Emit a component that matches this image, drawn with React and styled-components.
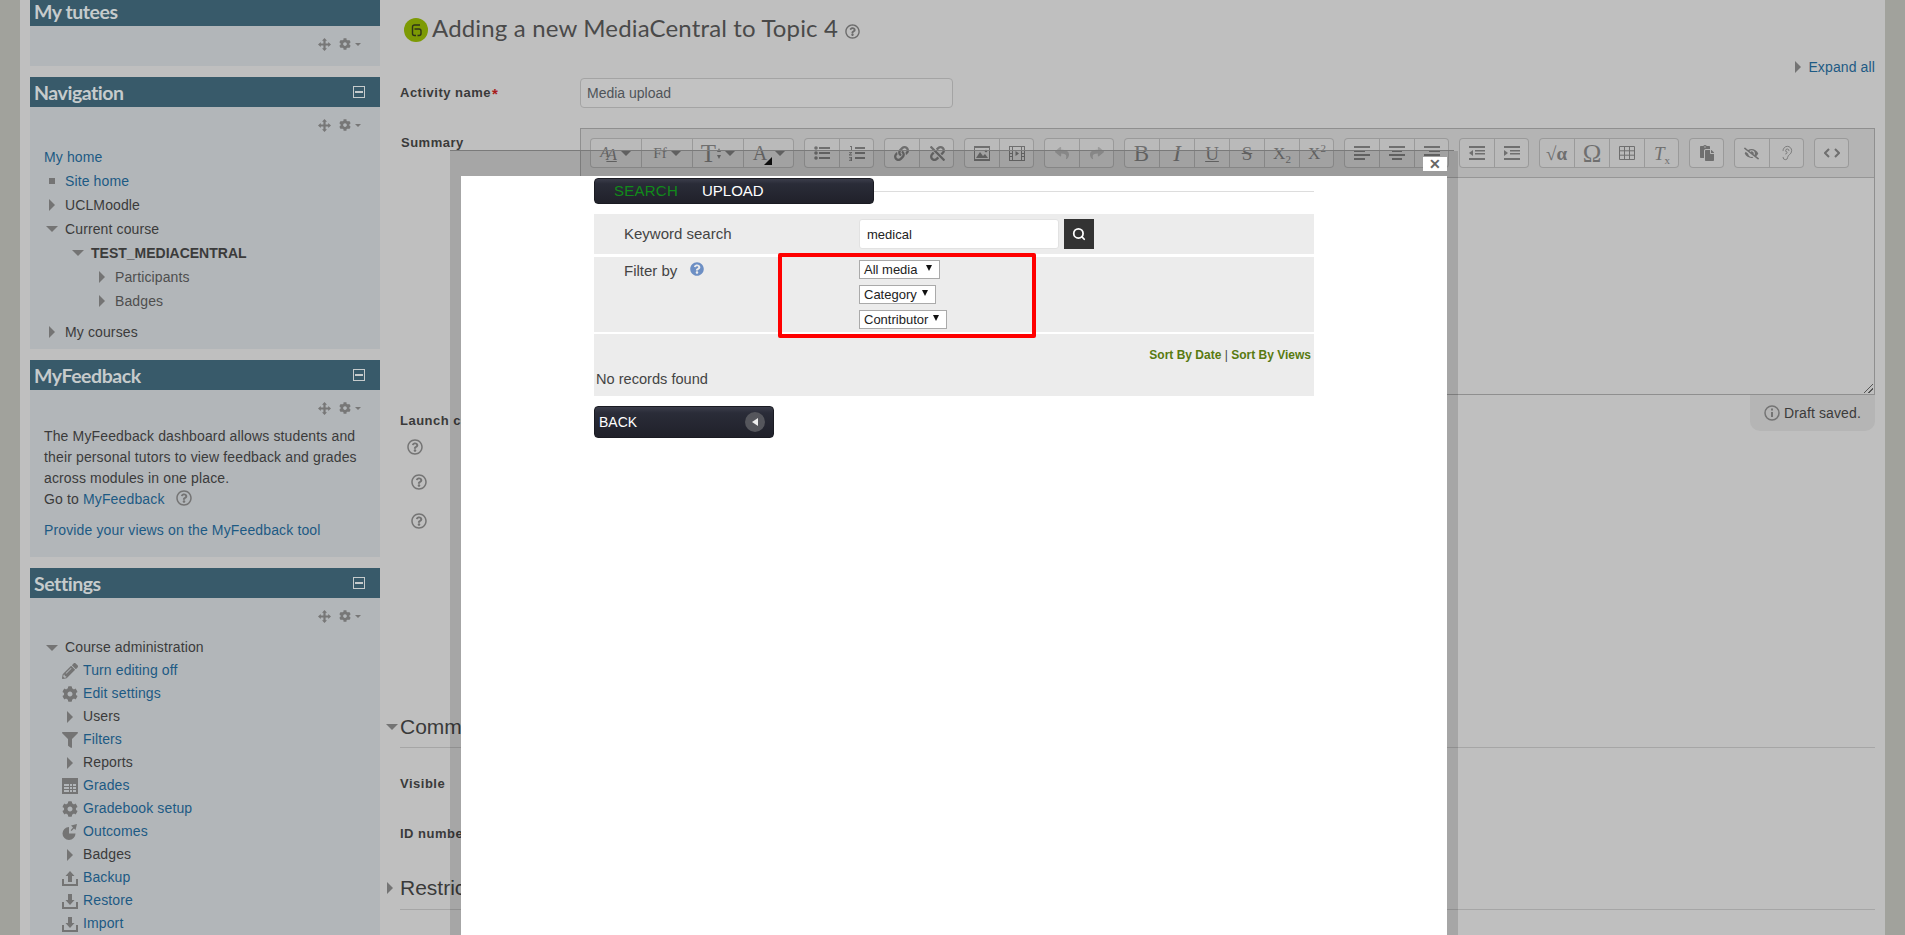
import React from "react";
import styled, { createGlobalStyle } from "styled-components";
import { FaCog, FaFilter, FaPencilAlt, FaLink, FaUnlink, FaReply, FaShare, FaPaste, FaEyeSlash, FaRegQuestionCircle, FaQuestionCircle } from "react-icons/fa";
import { Ear, Search } from "lucide-react";

const Global = createGlobalStyle`
  html, body { margin: 0; padding: 0; background: #a1a29c; }
  body { font-family: "Liberation Sans", Arial, sans-serif; font-size: 14px; color: #3b3b3b; }
  * { box-sizing: border-box; }
`;

const Viewport = styled.div`
  position: relative; width: 1905px; height: 935px; overflow: hidden;
  background: #a1a29c; padding: 0 20px;
`;
const Page = styled.div`
  display: flex; height: 935px; background: #bfbfbf; overflow: hidden;
`;
const Sidebar = styled.aside`
  flex: 0 0 360px; padding-left: 10px; margin-top: -4px; letter-spacing: 0.12px;
  display: flex; flex-direction: column; gap: 11px;
`;
const Block = styled.section`
  background: #b2b6b9; width: 350px; flex: none;
`;
const BlockHead = styled.header`
  height: 30px; background: #385a6a; display: flex; align-items: center; justify-content: space-between;
  padding: 0 15px 0 4px;
`;
const BlockTitle = styled.h2`
  margin: 1px 0 0; font: 700 19.5px/30px Lato, sans-serif; color: #c6cbcc; letter-spacing: -0.45px;
`;
const Minimise = styled.span`
  width: 12px; height: 12px; border: 1px solid #c6cbcc; display: flex; align-items: center; justify-content: center;
  &::after { content: ""; width: 8px; height: 2px; background: #c6cbcc; }
`;
const Controls = styled.div`
  height: ${p => p.$h || 38}px; display: flex; align-items: flex-start; justify-content: flex-end; gap: 8px;
  padding: 12px 19px 0 0; color: #777;
`;
const Caret = styled.span`
  width: 0; height: 0; border: 3.5px solid transparent; border-top: 3.5px solid #777; border-bottom: 0; margin: 5px 0 0 -4px;
`;
const Tree = styled.div`
  padding: 0 0 ${p => p.$pb || 0}px 14px;
`;
const Row = styled.div`
  height: ${p => p.$h}px; line-height: ${p => p.$h}px; display: flex; align-items: center;
  margin-left: ${p => p.$indent || 0}px; margin-top: ${p => p.$mt || 0}px; white-space: nowrap;
  font-weight: ${p => (p.$bold ? 700 : 400)}; letter-spacing: ${p => (p.$bold ? "0" : "inherit")};
  color: ${p => (p.$muted ? "#4e4e4e" : "#3b3b3b")};
`;
const Slot = styled.span`
  flex: 0 0 21px; display: flex; align-items: center; color: #747474;
`;
const TriRight = styled.span`
  width: 0; height: 0; margin-left: 5px; border-left: 6px solid #747474; border-top: 6px solid transparent; border-bottom: 6px solid transparent;
`;
const TriDown = styled.span`
  width: 0; height: 0; margin-left: 2px; border-top: 6px solid #747474; border-left: 6px solid transparent; border-right: 6px solid transparent;
`;
const Dot = styled.span`
  width: 6px; height: 6px; margin-left: 5px; background: #747474;
`;
const A = styled.span`
  color: #1d5a84;
`;
const Feedback = styled.div`
  padding: 0 14px; font-size: 14px; line-height: 21px; color: #3b3b3b; height: 131px; letter-spacing: 0.14px;
`;
const Provide = styled.div`
  margin-top: 10px;
`;
const HelpInline = styled.span`
  display: inline-flex; vertical-align: -2px; margin-left: 11px; color: #747474;
`;

const Main = styled.main`
  flex: 1; padding: 0 10px 0 20px; min-width: 0;
`;
const TitleRow = styled.div`
  height: 55px; padding: 15px 0 0 4px; display: flex; align-items: flex-start; gap: 4px;
`;
const TitleIcon = styled.span`
  width: 24px; height: 24px; margin-top: 3px; border-radius: 50%; background: #7d9a04; display: flex; align-items: center; justify-content: center;
`;
const Title = styled.h1`
  margin: 0; font: 400 24px/26px Lato, sans-serif; color: #4a4a4a; letter-spacing: 0.16px; white-space: nowrap;
`;
const TitleHelp = styled.span`
  margin: 9px 0 0 3px; display: flex; color: #6c6c6c;
`;
const ExpandRow = styled.div`
  height: 23px; display: flex; justify-content: flex-end; align-items: center; gap: 7px; letter-spacing: 0.12px;
`;
const FormRow = styled.div`
  display: flex; margin-top: ${p => p.$mt || 0}px;
`;
const Label = styled.label`
  flex: 0 0 180px; font-size: 13px; font-weight: 700; letter-spacing: 0.5px; color: #3a3a3a;
  line-height: 16px; padding-top: ${p => p.$pt || 0}px; padding-left: ${p => p.$pl || 0}px; white-space: nowrap;
`;
const Req = styled.span`
  color: #a81c1c; font-size: 15px; line-height: 12px; vertical-align: -2px; margin-left: 1px;
`;
const NameInput = styled.div`
  width: 373px; height: 30px; border: 1px solid #a4a4a4; border-radius: 4px; background: #c2c2c2;
  padding-left: 6px; line-height: 28px; font-size: 14px; color: #4f5459;
`;
const EditorCol = styled.div`
  flex: 1; display: flex; flex-direction: column; align-items: flex-end;
`;
const Editor = styled.div`
  align-self: stretch; height: 267px; border: 1px solid #8f8f8f; position: relative;
`;
const Toolbar = styled.div`
  height: 49px; background: #b4b4b4; border-bottom: 1px solid #969696; display: flex; gap: 10px; padding: 9px 0 0 9px;
`;
const Group = styled.div`
  display: flex; height: 30px; border-radius: 4px; background: #bababa; box-shadow: inset 0 0 0 1px #9a9a9a;
`;
const Btn = styled.span`
  width: ${p => p.$w || 35}px; flex: none; display: flex; align-items: center; justify-content: center; gap: 2px; color: ${p => (p.$faint ? "#9b9b9b" : "#6f6f6f")};
  font-family: "Liberation Serif", serif; font-size: ${p => p.$fs || 20}px; line-height: 1;
  & + & { border-left: 1px solid #9a9a9a; }
`;
const BtnCaret = styled.span`
  width: 0; height: 0; border-top: 5px solid #6f6f6f; border-left: 5.5px solid transparent; border-right: 5.5px solid transparent; margin-left: 2px;
`;
const DoubleA = styled.span`
  display: flex; align-items: flex-start; font-style: italic; font-size: 15px; line-height: 16px;
`;
const LowerA = styled.span`
  margin: 3px 0 0 -3px; text-decoration: underline; font-size: 17px;
`;
const Arrows = styled.span`
  display: flex; flex-direction: column; gap: 3px; margin-left: -1px;
  &::before { content: ""; border-bottom: 4px solid #6f6f6f; border-left: 2.5px solid transparent; border-right: 2.5px solid transparent; }
  &::after { content: ""; border-top: 4px solid #6f6f6f; border-left: 2.5px solid transparent; border-right: 2.5px solid transparent; }
`;
const ColorA = styled.span`
  position: relative; padding-right: 4px;
  &::after { content: ""; position: absolute; right: -1px; bottom: -2px; border-bottom: 8px solid #111; border-left: 8px solid transparent; }
`;
const Sub = styled.sub`
  font-size: 11px; line-height: 0; vertical-align: -4px;
`;
const Sup = styled.sup`
  font-size: 11px; line-height: 0; vertical-align: 7px;
`;
const Grip = styled.span`
  position: absolute; right: 1px; bottom: 1px; width: 9px; height: 9px;
  background: linear-gradient(135deg, transparent 45%, #555 45%, #555 55%, transparent 55%, transparent 72%, #555 72%, #555 82%, transparent 82%);
`;
const Draft = styled.div`
  width: 125px; height: 36px; background: #b5b5b5; border-radius: 0 0 10px 10px; display: flex; align-items: center; gap: 4px;
  padding-left: 14px; font-size: 14px; color: #3b3b3b; white-space: nowrap; letter-spacing: 0.12px;
`;
const HelpStack = styled.div`
  display: flex; flex-direction: column; color: #747474;
`;
const HelpItem = styled.span`
  display: flex; margin: ${p => p.$mt}px 0 0 ${p => p.$ml}px;
`;
const SectionHead = styled.div`
  position: relative; height: ${p => p.$h}px; font-size: 21px; line-height: 26px; color: #3a3a3a; border-bottom: 1px solid #a6a6a6;
  margin-top: ${p => p.$mt}px;
`;
const SectionTri = styled.span`
  position: absolute; left: ${p => p.$left}px; top: ${p => p.$top}px; display: flex;
`;

const Overlay = styled.div`
  position: absolute; left: 450px; top: 151px; width: 1008px; bottom: 0; background: rgba(0,0,0,.13); padding: 25px 11px 0;
  &::before { content: ""; position: absolute; left: 0; top: -1px; width: 1004px; height: 1px; background: #7a7a7a; }
`;
const Sheet = styled.div`
  height: 100%; background: #fff; padding: 2px 0 0 133px; position: relative;
  font-family: "Liberation Sans", Arial, sans-serif;
`;
const Close = styled.span`
  position: absolute; right: 0; top: -19px; width: 24px; height: 14px; background: #fff; display: flex; align-items: center; justify-content: center;
  font: 700 14px/14px "Liberation Sans", sans-serif; color: #666;
`;
const TabLine = styled.div`
  width: 720px; display: flex; align-items: center;
  &::after { content: ""; flex: 1; height: 1px; background: #ddd; }
`;
const darkBar = `
  background: linear-gradient(#3b3d4a 0, #2a2c38 20%, #20212a 100%); border-radius: 4px; border: 1px solid #1a1b22;
`;
const Tabs = styled.div`
  ${darkBar}
  width: 280px; height: 26px; display: flex; align-items: center; gap: 24px; padding: 0 0 2px 19px; font-size: 15px;
`;
const Tab = styled.span`
  color: ${p => (p.$active ? "#118a1a" : "#fff")}; letter-spacing: ${p => (p.$active ? "0.25px" : "0")};
`;
const Panel = styled.div`
  width: 720px; background: #ececec; margin-top: ${p => p.$mt}px; height: ${p => p.$h}px; position: relative; color: #444;
`;
const SearchLine = styled.div`
  display: flex; padding: 5px 0 0 30px; height: 100%;
`;
const PanelLabel = styled.div`
  flex: 0 0 235px; font-size: 15px; line-height: 18px; padding-top: ${p => p.$pt}px; display: flex; gap: 13px; align-items: flex-start;
`;
const SearchInput = styled.div`
  width: 200px; height: 30px; background: #fff; border: 1px solid #e2e2e2; border-radius: 3px; font-size: 13px; line-height: 30px; padding-left: 7px; color: #222;
`;
const SearchBtn = styled.span`
  width: 30px; height: 30px; margin-left: 5px; background: #333; color: #fff; display: flex; align-items: center; justify-content: center;
`;
const FilterLine = styled.div`
  display: flex; padding: 3px 0 0 30px;
`;
const FilterCol = styled.div`
  display: flex; flex-direction: column; gap: 6px; align-items: flex-start;
`;
const FakeSelect = styled.div`
  width: ${p => p.$w}px; height: 19px; background: #fff; border: 1px solid #aaa; display: flex; align-items: center; justify-content: space-between;
  padding: 0 7px 0 4px; font-size: 13px; color: #222; white-space: nowrap;
`;
const SelectArrow = styled.span`
  width: 0; height: 0; margin-top: -3px; border-top: 6px solid #111; border-left: 3px solid transparent; border-right: 3px solid transparent;
`;
const RedBox = styled.div`
  position: absolute; z-index: 1; left: 184px; top: -4px; width: 258px; height: 85px; border: 4px solid #f00; border-radius: 2px; pointer-events: none;
`;
const Sort = styled.div`
  text-align: right; padding: 14px 3px 0 0; font-size: 12px; line-height: 14px; font-weight: 700; color: #587a10;
`;
const SortSep = styled.span`
  color: #444; font-weight: 400;
`;
const NoRecords = styled.div`
  margin-top: 8px; padding-left: 2px; font-size: 14.6px; line-height: 18px;
`;
const Back = styled.div`
  ${darkBar}
  width: 180px; height: 32px; margin-top: 10px; display: flex; align-items: center; justify-content: space-between; padding: 0 8px 0 4px;
  color: #fff; font-size: 14px;
`;
const BackDot = styled.span`
  width: 20px; height: 20px; border-radius: 50%; background: #55565c; display: flex; align-items: center; justify-content: center;
  &::after { content: ""; width: 0; height: 0; border-right: 6px solid #eee; border-top: 4px solid transparent; border-bottom: 4px solid transparent; }
`;

const Move = () => (
  <svg width="13" height="13" viewBox="0 0 13 13" fill="#777"><path d="M6.5 0 9 2.8H7.6V5.4H10.2V4L13 6.5 10.2 9V7.6H7.6V10.2H9L6.5 13 4 10.2H5.4V7.6H2.8V9L0 6.5 2.8 4V5.4H5.4V2.8H4Z" /></svg>
);
const BlockControls = ({ h }) => (
  <Controls $h={h}><Move /><FaCog size={12} /><Caret /></Controls>
);
const Help = ({ size = 16 }) => <FaRegQuestionCircle size={size} />;
const GradesIcon = () => (
  <svg width="16" height="16" viewBox="0 0 16 16"><path fill="#747474" d="M0 0h16v16H0z" /><path fill="#b2b6b9" d="M2 6h5v2H2zm0 3h5v2H2zm0 3h5v2H2zm6-6h2v2H8zm3 0h3v2h-3zM8 9h2v2H8zm3 0h3v2h-3zm-3 3h2v2H8zm3 0h3v2h-3z" /></svg>
);
const OutcomesIcon = () => (
  <svg width="16" height="16" viewBox="0 0 16 16" fill="#747474"><path d="M7 3a6.5 6.5 0 1 0 6.5 6.5H7z" /><path d="M9 1.5 15 0l-1.5 6L12 4.5 9.5 7 8.7 6.2 11 3.5z" /></svg>
);
const Tray = ({ up }) => (
  <svg width="16" height="16" viewBox="0 0 16 16" fill="#747474">
    <path d="M0 9h2v5h12V9h2v7H0z" />
    {up ? <path d="M8 1l4.5 5H10v6H6V6H3.5z" /> : <path d="M6 1h4v6h2.5L8 12 3.5 7H6z" />}
  </svg>
);
const Lines = ({ rows }) => (
  <svg width="16" height="14" viewBox="0 0 16 14" fill="#6f6f6f">
    {rows.map((r, i) => <rect key={i} x={r[0]} y={i * 4} width={r[1]} height="2" />)}
  </svg>
);
const BulletList = () => (
  <svg width="16" height="14" viewBox="0 0 16 14" fill="#6f6f6f"><circle cx="2" cy="2" r="1.8" /><circle cx="2" cy="7" r="1.8" /><circle cx="2" cy="12" r="1.8" /><path d="M5 1h11v2H5zm0 5h11v2H5zm0 5h11v2H5z" /></svg>
);
const NumList = () => (
  <svg width="16" height="15" viewBox="0 0 16 15" fill="#6f6f6f"><path d="M1 0h2v4H2V1H1zM0 6h3v.8L1 8.6h2v.8H0v-.8l2-1.8H0zm0 5h3v4H0v-.8h2v-.8H.6v-.8H2v-.8H0zM6 1h10v2H6zm0 5h10v2H6zm0 5h10v2H6z" /></svg>
);
const ImageIcon = () => (
  <svg width="16" height="15" viewBox="0 0 16 15"><path fill="#6f6f6f" fillRule="evenodd" d="M0 0h16v15H0zm1 2v11h14V2z" /><path fill="#6f6f6f" d="M2 12l4-6 3 4 2-2 3 4z" /><circle cx="12" cy="5" r="1.3" fill="#6f6f6f" /></svg>
);
const FilmIcon = () => (
  <svg width="16" height="15" viewBox="0 0 16 15"><path fill="#6f6f6f" fillRule="evenodd" d="M0 0h16v15H0zm1 1v3h2V1zm0 4v2h2V5zm0 3v2h2V8zm0 3v3h2v-3zM13 1v3h2V1zm0 4v2h2V5zm0 3v2h2V8zm0 3v3h2v-3zM4 1v13h8V1z" /><path fill="#6f6f6f" d="M6.5 5l3.5 2.5L6.5 10z" /></svg>
);
const IndentIcon = ({ out }) => (
  <svg width="16" height="14" viewBox="0 0 16 14" fill="#6f6f6f"><path d="M0 0h16v2H0zM6 4h10v1.5H6zm0 3h10v1.5H6zM0 12h16v2H0z" /><path d={out ? "M4 4v6L0 7z" : "M0 4v6l4-3z"} /></svg>
);
const TableIcon = () => (
  <svg width="16" height="14" viewBox="0 0 16 14" fill="none" stroke="#6f6f6f"><path d="M.5.5h15v13H.5zM.5 4.8h15M.5 9.2h15M5.5.5v13M10.5.5v13" /></svg>
);
const CodeIcon = () => (
  <svg width="16" height="10" viewBox="0 0 16 10" fill="none" stroke="#6f6f6f" strokeWidth="2"><path d="M5 1 1 5l4 4M11 1l4 4-4 4" /></svg>
);
const Info = () => (
  <svg width="16" height="16" viewBox="0 0 16 16" fill="none" stroke="#747474" strokeWidth="1.5"><circle cx="8" cy="8" r="7" /><path d="M8 7v5" strokeWidth="2" /><path d="M8 3.5v2" strokeWidth="2" /></svg>
);
const MediaGlyph = () => (
  <svg width="15" height="15" viewBox="0 0 15 15" fill="none" stroke="#2e3418" strokeWidth="1.4"><path d="M11 2H5.5a2 2 0 0 0-2 2v6.5a2 2 0 0 0 2 2H7" /><path d="M5.5 6H10a2 2 0 0 1 2 2v2.5a2 2 0 0 1-2 2H8.5" /></svg>
);

const navRows = [
  { text: "Site home", link: 1, icon: <Dot /> },
  { text: "UCLMoodle", icon: <TriRight /> },
  { text: "Current course", icon: <TriDown /> },
  { text: "TEST_MEDIACENTRAL", icon: <TriDown />, indent: 26, bold: 1 },
  { text: "Participants", icon: <TriRight />, indent: 50, muted: 1 },
  { text: "Badges", icon: <TriRight />, indent: 50, muted: 1 },
];
const settingsRows = [
  { text: "Turn editing off", link: 1, icon: <FaPencilAlt size={16} /> },
  { text: "Edit settings", link: 1, icon: <FaCog size={16} /> },
  { text: "Users", icon: <TriRight /> },
  { text: "Filters", link: 1, icon: <FaFilter size={16} /> },
  { text: "Reports", icon: <TriRight /> },
  { text: "Grades", link: 1, icon: <GradesIcon /> },
  { text: "Gradebook setup", link: 1, icon: <FaCog size={16} /> },
  { text: "Outcomes", link: 1, icon: <OutcomesIcon /> },
  { text: "Badges", icon: <TriRight /> },
  { text: "Backup", link: 1, icon: <Tray up /> },
  { text: "Restore", link: 1, icon: <Tray /> },
  { text: "Import", link: 1, icon: <Tray /> },
];

const TreeRow = ({ r, h }) => (
  <Row $h={h} $indent={r.indent} $bold={r.bold} $muted={r.muted}>
    <Slot>{r.icon}</Slot>
    {r.link ? <A>{r.text}</A> : r.text}
  </Row>
);

const toolGroups = [
  [
    { w: 51, c: <><DoubleA>A<LowerA>A</LowerA></DoubleA><BtnCaret /></> },
    { w: 51, fs: 15, c: <><span>Ff</span><BtnCaret /></> },
    { w: 51, fs: 25, c: <><span>T</span><Arrows /><BtnCaret /></> },
    { w: 51, fs: 20, c: <><ColorA>A</ColorA><BtnCaret /></> },
  ],
  [{ c: <BulletList /> }, { c: <NumList /> }],
  [{ c: <FaLink size={15} /> }, { c: <FaUnlink size={15} /> }],
  [{ c: <ImageIcon /> }, { c: <FilmIcon /> }],
  [{ faint: 1, c: <FaReply size={14} /> }, { faint: 1, c: <FaShare size={14} /> }],
  [
    { fs: 23, c: "B" },
    { fs: 23, c: <i>I</i> },
    { fs: 19, c: <u>U</u> },
    { fs: 19, c: <s>S</s> },
    { fs: 17, c: <span>X<Sub>2</Sub></span> },
    { fs: 17, c: <span>X<Sup>2</Sup></span> },
  ],
  [
    { c: <Lines rows={[[0, 16], [0, 11], [0, 16], [0, 11]]} /> },
    { c: <Lines rows={[[0, 16], [3, 10], [0, 16], [3, 10]]} /> },
    { c: <Lines rows={[[0, 16], [5, 11], [0, 16], [5, 11]]} /> },
  ],
  [{ c: <IndentIcon out /> }, { c: <IndentIcon /> }],
  [
    { fs: 19, c: <b>√α</b> },
    { fs: 25, c: "Ω" },
    { c: <TableIcon /> },
    { fs: 19, c: <span><i>T</i><Sub>x</Sub></span> },
  ],
  [{ c: <FaPaste size={16} /> }],
  [{ c: <FaEyeSlash size={15} /> }, { c: <Ear size={16} strokeWidth={1.2} /> }],
  [{ c: <CodeIcon /> }],
];

export default function App() {
  return (
    <>
      <Global />
      <Viewport>
        <Page>
          <Sidebar>
            <Block>
              <BlockHead><BlockTitle>My tutees</BlockTitle></BlockHead>
              <BlockControls h={40} />
            </Block>
            <Block>
              <BlockHead><BlockTitle>Navigation</BlockTitle><Minimise /></BlockHead>
              <BlockControls />
              <Tree $pb={5}>
                <Row $h={24}><A>My home</A></Row>
                {navRows.map(r => <TreeRow key={r.text} r={r} h={24} />)}
                <Row $h={24} $mt={7}><Slot><TriRight /></Slot>My courses</Row>
              </Tree>
            </Block>
            <Block>
              <BlockHead><BlockTitle>MyFeedback</BlockTitle><Minimise /></BlockHead>
              <BlockControls h={36} />
              <Feedback>
                The MyFeedback dashboard allows students and<br />
                their personal tutors to view feedback and grades<br />
                across modules in one place.<br />
                Go to <A>MyFeedback</A><HelpInline><Help /></HelpInline>
                <Provide><A>Provide your views on the MyFeedback tool</A></Provide>
              </Feedback>
            </Block>
            <Block>
              <BlockHead><BlockTitle>Settings</BlockTitle><Minimise /></BlockHead>
              <BlockControls />
              <Tree>
                <Row $h={23}><Slot><TriDown /></Slot>Course administration</Row>
                {settingsRows.map(r => <TreeRow key={r.text} r={{ ...r, indent: 18 }} h={23} />)}
              </Tree>
            </Block>
          </Sidebar>
          <Main>
            <TitleRow>
              <TitleIcon><MediaGlyph /></TitleIcon>
              <Title>Adding a new MediaCentral to Topic 4</Title>
              <TitleHelp><Help size={15} /></TitleHelp>
            </TitleRow>
            <ExpandRow><TriRight /><A>Expand all</A></ExpandRow>
            <FormRow>
              <Label $pt={7}>Activity name<Req>*</Req></Label>
              <NameInput>Media upload</NameInput>
            </FormRow>
            <FormRow $mt={20}>
              <Label $pt={7} $pl={1}>Summary</Label>
              <EditorCol>
                <Editor>
                  <Toolbar>
                    {toolGroups.map((g, i) => (
                      <Group key={i}>
                        {g.map((b, j) => <Btn key={j} $w={b.w} $fs={b.fs} $faint={b.faint}>{b.c}</Btn>)}
                      </Group>
                    ))}
                  </Toolbar>
                  <Grip />
                </Editor>
                <Draft><Info />Draft saved.</Draft>
              </EditorCol>
            </FormRow>
            <FormRow $mt={-18}>
              <Label>Launch container</Label>
            </FormRow>
            <HelpStack>
              <HelpItem $mt={10} $ml={7}><Help /></HelpItem>
              <HelpItem $mt={19} $ml={11}><Help /></HelpItem>
              <HelpItem $mt={23} $ml={11}><Help /></HelpItem>
            </HelpStack>
            <SectionHead $mt={185} $h={34}>
              <SectionTri $left={-16} $top={10}><TriDown /></SectionTri>
              Common module settings
            </SectionHead>
            <FormRow $mt={28}><Label>Visible</Label></FormRow>
            <FormRow $mt={34}><Label>ID number</Label></FormRow>
            <SectionHead $mt={33} $h={35}>
              <SectionTri $left={-18} $top={7}><TriRight /></SectionTri>
              Restrict access
            </SectionHead>
          </Main>
        </Page>
        <Overlay>
          <Sheet>
            <Close>✕</Close>
            <TabLine>
              <Tabs><Tab $active>SEARCH</Tab><Tab>UPLOAD</Tab></Tabs>
            </TabLine>
            <Panel $mt={10} $h={40}>
              <SearchLine>
                <PanelLabel $pt={6}>Keyword search</PanelLabel>
                <SearchInput>medical</SearchInput>
                <SearchBtn><Search size={14} strokeWidth={3} /></SearchBtn>
              </SearchLine>
            </Panel>
            <Panel $mt={3} $h={75}>
              <FilterLine>
                <PanelLabel $pt={2}>Filter by <FaQuestionCircle size={14} color="#6d8fc4" /></PanelLabel>
                <FilterCol>
                  <FakeSelect $w={81}>All media<SelectArrow /></FakeSelect>
                  <FakeSelect $w={77}>Category<SelectArrow /></FakeSelect>
                  <FakeSelect $w={88}>Contributor<SelectArrow /></FakeSelect>
                </FilterCol>
              </FilterLine>
              <RedBox />
            </Panel>
            <Panel $mt={2} $h={62}>
              <Sort>Sort By Date <SortSep>|</SortSep> Sort By Views</Sort>
              <NoRecords>No records found</NoRecords>
            </Panel>
            <Back>BACK<BackDot /></Back>
          </Sheet>
        </Overlay>
      </Viewport>
    </>
  );
}
